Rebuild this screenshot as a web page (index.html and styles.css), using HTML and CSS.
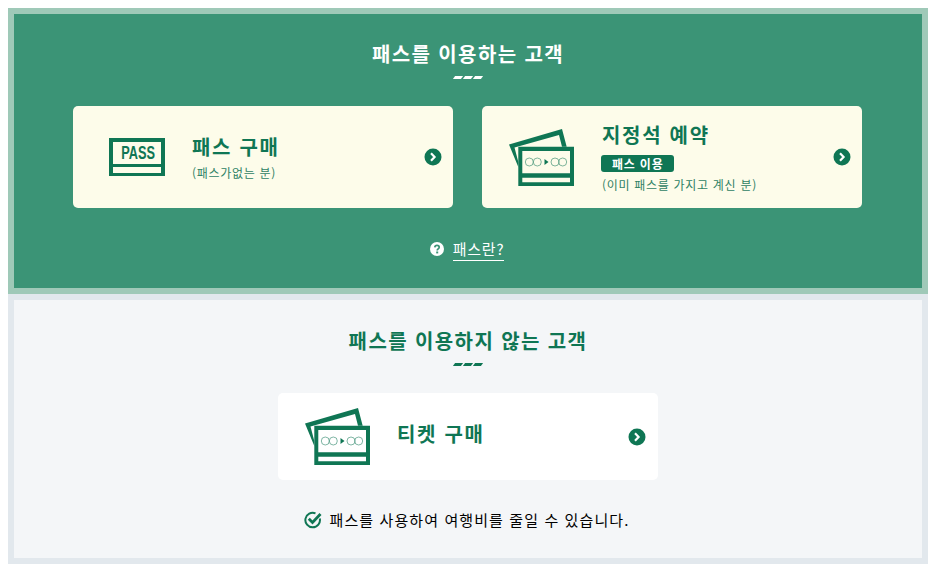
FILE: index.html
```html
<!DOCTYPE html>
<html lang="ko">
<head>
  <meta charset="UTF-8">
  <title>패스 구매</title>
  <link rel="stylesheet" href="styles.css">
</head>
<body>
  <svg class="defs" width="0" height="0">
    <symbol id="arrow" viewBox="0 0 18 18">
      <circle cx="9" cy="9" r="8.500" fill="#0f7654"/>
      <path d="M7 5.200 10.600 9 7 12.800" fill="none" stroke="#fff" stroke-width="2.200"/>
    </symbol>
    <symbol id="ticket" viewBox="0 0 66 58">
      <path d="M0 15.500 53 0l4.700 17.700H53L50 6 5.500 18.500 9.300 33v5z" fill="#0f7654"/>
      <path d="M9.300 17.700H65V57H9.300z" fill="#0f7654"/>
      <path d="M13.300 22H61v22.300H13.300zM13.300 48.700H61v4.600H13.300z" fill="currentColor"/>
      <g fill="none" stroke="#0f7654" stroke-width=".7" opacity=".75">
        <circle cx="20.300" cy="33" r="4"/><circle cx="28.300" cy="33" r="4"/>
        <circle cx="46" cy="33" r="4"/><circle cx="53.700" cy="33" r="4"/>
      </g>
      <path d="M35.500 30v6l4-3z" fill="#0f7654"/>
    </symbol>
  </svg>

  <section class="box box-pass">
    <h2 class="box-title">패스를 이용하는 고객</h2>
    <div class="dashes"><i></i><i></i><i></i></div>
    <div class="cards">
      <a class="card" href="#">
        <span class="icon-pass">
          <span class="pass-top"><span class="pass-word">PASS</span></span>
          <span class="pass-strip"></span>
        </span>
        <span class="card-text">
          <strong class="card-name">패스 구매</strong>
          <small class="card-note">(패스가없는 분)</small>
        </span>
        <svg class="arrow"><use href="#arrow"/></svg>
      </a>
      <a class="card card-seat" href="#">
        <svg class="ticket"><use href="#ticket"/></svg>
        <span class="card-text">
          <strong class="card-name">지정석 예약</strong>
          <span class="tag">패스 이용</span>
          <small class="card-note">(이미 패스를 가지고 계신 분)</small>
        </span>
        <svg class="arrow"><use href="#arrow"/></svg>
      </a>
    </div>
    <div class="help">
      <svg class="help-icon" viewBox="0 0 14 14">
        <circle cx="7" cy="7" r="7" fill="#fff"/>
        <path d="M4.800 5.400C4.900 4 5.800 3.300 7 3.300c1.300 0 2.200.8 2.200 1.900 0 1.700-2 1.600-2 3.200" fill="none" stroke="#3b9476" stroke-width="1.700"/>
        <rect x="6.200" y="9.500" width="2" height="1.900" fill="#3b9476"/>
      </svg>
      <a class="help-link" href="#">패스란?</a>
    </div>
  </section>

  <section class="box box-plain">
    <h2 class="box-title">패스를 이용하지 않는 고객</h2>
    <div class="dashes"><i></i><i></i><i></i></div>
    <div class="cards">
      <a class="card card-ticket" href="#">
        <svg class="ticket"><use href="#ticket"/></svg>
        <span class="card-text">
          <strong class="card-name">티켓 구매</strong>
        </span>
        <svg class="arrow"><use href="#arrow"/></svg>
      </a>
    </div>
    <p class="saving">
      <svg class="check" viewBox="0 0 18 18">
        <path d="M15.800 7.500A7.300 7.300 0 1 1 11.500 2.300" fill="none" stroke="#0f7654" stroke-width="2"/>
        <path d="M4.800 7.800l3.700 3.700L16.500 3" fill="none" stroke="#0f7654" stroke-width="2.800"/>
      </svg>
      패스를 사용하여 여행비를 줄일 수 있습니다.
    </p>
  </section>
</body>
</html>
```
FILE: styles.css
```css
body {
  margin: 8px;
  width: 920px;
  font-family: "Noto Sans CJK KR", "Noto Sans", sans-serif;
  color: #000;
  background-color: #fff;
}

a {
  text-decoration: none;
}

.defs {
  position: absolute;
}

.box {
  box-sizing: border-box;
  border: 6px solid;
  text-align: center;
}

.box-pass {
  height: 286px;
  padding-top: 25px;
  background-color: #3b9476;
  border-color: #9fc9b8;
}

.box-plain {
  height: 270px;
  padding-top: 26px;
  background-color: #f4f6f8;
  border-color: #e2e8ed;
}

.box-title {
  margin: 0;
  font-size: 20px;
  line-height: 30px;
  font-weight: 700;
  letter-spacing: 1.4px;
  color: #fff;
}

.box-plain .box-title {
  color: #0f7654;
}

.dashes {
  display: flex;
  justify-content: center;
  gap: 2px;
  margin-top: 7px;
}

.dashes i {
  width: 8px;
  height: 3px;
  background-color: #fff;
  transform: skewX(-35deg);
}

.box-plain .dashes i {
  background-color: #0f7654;
}

.cards {
  display: flex;
  justify-content: center;
  gap: 29px;
  margin-top: 27px;
}

.box-pass .cards {
  padding-right: 1px;
}

.card {
  display: flex;
  align-items: center;
  width: 380px;
  height: 102px;
  box-sizing: border-box;
  padding: 0 11px 0 36px;
  color: #fdfcea;
  background-color: #fdfcea;
  border-radius: 5px;
  text-align: left;
}

.card-seat {
  padding-left: 27px;
}

.card-ticket {
  height: 87px;
  padding-left: 27px;
  padding-right: 12px;
  color: #fff;
  background-color: #fff;
}

.card-text {
  display: flex;
  flex-direction: column;
  align-items: flex-start;
  flex: 1;
  margin-left: 27px;
}

.card-ticket .card-text {
  margin-left: 26px;
}

.card-name {
  margin-bottom: 3px;
  font-size: 20px;
  line-height: 28px;
  font-weight: 700;
  letter-spacing: 1.7px;
  color: #0f7654;
}

.card-ticket .card-name {
  margin-bottom: 0;
  padding-bottom: 5px;
}

.card-note {
  font-size: 12px;
  line-height: 18px;
  letter-spacing: .7px;
  color: #2f8265;
}

.tag {
  margin: 3px 0 4px -1px;
  padding: 0 10px 0 11px;
  font-size: 12px;
  line-height: 17px;
  font-weight: 700;
  letter-spacing: .8px;
  color: #fff;
  background-color: #0f7654;
  border-radius: 3px;
}

.icon-pass {
  display: flex;
  flex-direction: column;
  width: 56px;
  height: 38px;
  box-sizing: border-box;
  border: 4px solid #0f7654;
  border-bottom-width: 3px;
  background-color: #0f7654;
}

.pass-top {
  height: 22px;
  font-family: "Liberation Sans", sans-serif;
  font-size: 19px;
  line-height: 22px;
  font-weight: 700;
  text-align: center;
  color: #0f7654;
  background-color: #fdfcea;
}

.pass-word {
  display: inline-block;
  transform: scaleX(.67);
}

.pass-strip {
  height: 6px;
  margin-top: 3px;
  background-color: #fdfcea;
}

.ticket {
  width: 66px;
  height: 58px;
  margin-top: 2px;
}

.card-ticket .ticket {
  margin-top: 0;
}

.arrow {
  width: 18px;
  height: 18px;
}

.help {
  display: flex;
  justify-content: center;
  align-items: center;
  gap: 9px;
  margin-top: 29px;
  padding-right: 2px;
}

.help-icon {
  width: 14px;
  height: 14px;
}

.help-link {
  font-size: 15px;
  line-height: 23px;
  letter-spacing: .8px;
  color: #fff;
  border-bottom: 1px solid #fff;
}

.saving {
  display: flex;
  justify-content: center;
  align-items: center;
  gap: 8px;
  margin: 28px 0 0;
  padding-right: 3px;
  font-size: 15px;
  line-height: 24px;
  letter-spacing: 1.1px;
}

.check {
  width: 18px;
  height: 18px;
}
```
